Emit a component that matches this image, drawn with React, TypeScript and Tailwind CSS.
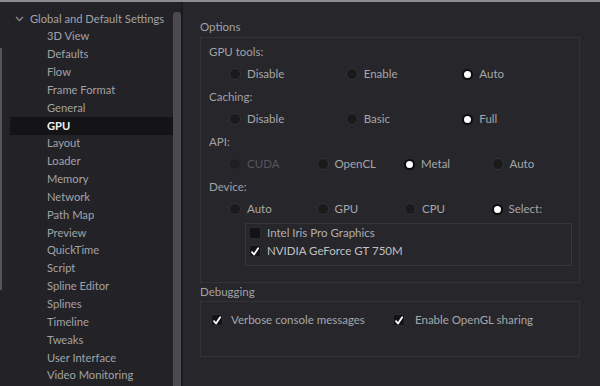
import React from 'react';

const treeItems = [
  '3D View', 'Defaults', 'Flow', 'Frame Format', 'General', 'GPU', 'Layout', 'Loader',
  'Memory', 'Network', 'Path Map', 'Preview', 'QuickTime', 'Script', 'Spline Editor',
  'Splines', 'Timeline', 'Tweaks', 'User Interface', 'Video Monitoring'
];

type Opt = { label: string; checked?: boolean; disabled?: boolean };

const Radio: React.FC<Opt> = ({ label, checked, disabled }) => (
  <div className="flex items-center gap-[6px]">
    {checked ? (
      <span className="w-[11px] h-[11px] rounded-full bg-white border-2 border-[#0c0c0e] shrink-0" />
    ) : (
      <span className={`w-[12px] h-[12px] rounded-full border shrink-0 ${disabled ? 'bg-[#1f1f23] border-[#2a2a2e]' : 'bg-[#1a1a1c] border-[#333337]'}`} />
    )}
    <span className={disabled ? 'text-[#55555a]' : 'text-[#a6a6aa]'}>{label}</span>
  </div>
);

const Check: React.FC<{ checked?: boolean }> = ({ checked }) => (
  <span className="w-[12px] h-[12px] bg-[#131315] border border-[#2c2c30] rounded-[2px] flex items-center justify-center shrink-0">
    {checked && (
      <svg width="11" height="11" viewBox="0 0 11 11">
        <path d="M2.2 6.2 L4.4 8.8 L9 2" fill="none" stroke="#ffffff" strokeWidth="2" strokeLinecap="round" strokeLinejoin="round" />
      </svg>
    )}
  </span>
);

const RadioRow: React.FC<{ opts: Opt[]; cols: 3 | 4 }> = ({ opts, cols }) => (
  <div className={`h-[20px] pl-[28px] grid items-center ${cols === 3 ? 'grid-cols-3' : 'grid-cols-4'}`}>
    {opts.map(o => <Radio key={o.label} {...o} />)}
  </div>
);

const GroupLabel: React.FC<{ text: string }> = ({ text }) => (
  <div className="h-[25px] flex items-center pl-[8px] text-[#a2a2a6]">{text}</div>
);

export default function App() {
  return (
    <div className="w-[600px] h-[386px] overflow-hidden flex flex-col bg-[#26262b] text-[11.5px]" style={{ fontFamily: 'Lato, "Open Sans", sans-serif' }}>
      <div className="h-[2px] bg-[#8c8c90] shrink-0" />
      <div className="flex flex-1 min-h-0">
        {/* left edge sliver */}
        <div className="w-[2px] bg-[#222227] pt-[46px]">
          <div className="h-[242px] bg-[#55555a]" />
        </div>

        {/* settings tree */}
        <div className="w-[171px] bg-[#222227] pt-[8px] text-[11.2px] text-[#a2a2a6]">
          <div className="h-[17.85px] flex items-center pl-[13px] gap-[6px]">
            <svg width="9" height="6" viewBox="0 0 9 6">
              <path d="M1 1 L4.5 4.5 L8 1" fill="none" stroke="#8a8a8e" strokeWidth="1.3" />
            </svg>
            <span>Global and Default Settings</span>
          </div>
          {treeItems.map(item => (
            <div
              key={item}
              className={`h-[17.85px] flex items-center ml-[8px] pl-[37px] ${item === 'GPU' ? 'bg-[#141416] text-[#f0f0f0] font-bold' : ''}`}
            >
              {item}
            </div>
          ))}
        </div>

        {/* scrollbar */}
        <div className="w-[8px] bg-[#222227] pt-[10px]">
          <div className="h-full bg-[#4a4a50] rounded-t-[3px]" />
        </div>
        <div className="w-[2px] bg-[#1a1a1e]" />

        {/* main */}
        <div className="flex-1 pl-[17px] pr-[20px] pt-[14px] text-[#a6a6aa]">
          <div className="h-[21px] flex items-center text-[#a2a2a6]">Options</div>
          <div className="border border-[#323237] pt-[1px] pb-[16px]">
            <GroupLabel text="GPU tools:" />
            <RadioRow cols={3} opts={[{ label: 'Disable' }, { label: 'Enable' }, { label: 'Auto', checked: true }]} />
            <GroupLabel text="Caching:" />
            <RadioRow cols={3} opts={[{ label: 'Disable' }, { label: 'Basic' }, { label: 'Full', checked: true }]} />
            <GroupLabel text="API:" />
            <RadioRow cols={4} opts={[{ label: 'CUDA', disabled: true }, { label: 'OpenCL' }, { label: 'Metal', checked: true }, { label: 'Auto' }]} />
            <GroupLabel text="Device:" />
            <RadioRow cols={4} opts={[{ label: 'Auto' }, { label: 'GPU' }, { label: 'CPU' }, { label: 'Select:', checked: true }]} />
            <div className="mt-[4px] ml-[44px] mr-[7px] border border-[#36363b] pl-[3px] pb-[5px]">
              <div className="h-[18px] flex items-center gap-[6px]">
                <Check />
                <span className="text-[#b0b0b4]">Intel Iris Pro Graphics</span>
              </div>
              <div className="h-[18px] flex items-center gap-[6px]">
                <Check checked />
                <span className="text-[#c0c0c4]">NVIDIA GeForce GT 750M</span>
              </div>
            </div>
          </div>

          <div className="h-[18px] flex items-center text-[#a2a2a6]">Debugging</div>
          <div className="border border-[#323237] pt-[9px] pb-[27px] pl-[10px] flex">
            <div className="w-[182px] h-[18px] flex items-center gap-[8px]">
              <Check checked />
              <span>Verbose console messages</span>
            </div>
            <div className="h-[18px] flex items-center gap-[10px]">
              <Check checked />
              <span>Enable OpenGL sharing</span>
            </div>
          </div>
        </div>
      </div>
    </div>
  );
}
